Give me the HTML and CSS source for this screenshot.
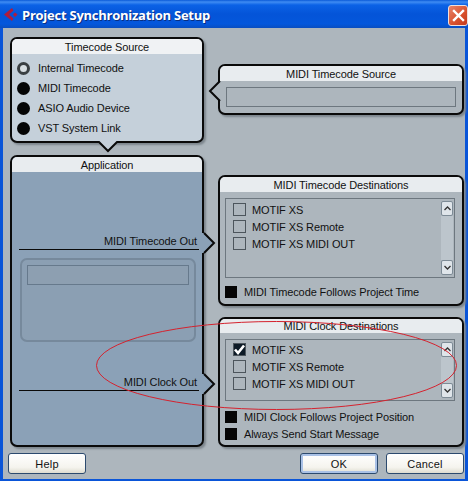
FILE: index.html
```html
<!DOCTYPE html>
<html>
<head>
    <meta charset="UTF-8">
    <title>Project Synchronization Setup</title>
    <link rel="stylesheet" href="styles.css">
</head>
<body>
    <div class="window">
        <div class="titlebar">
            <svg class="app-icon" width="16" height="16" viewBox="0 0 16 16">
                <path d="M8 0 L0 6.5 L8 13 L9.5 10.5 L5 6.5 L9.5 2.5 Z" fill="#b01c3c"/>
                <path d="M11 4.5 L13.5 6.5 L11 9 L9 6.5 Z" fill="#b01c3c"/>
            </svg>
            <span class="title-text">Project Synchronization Setup</span>
            <div class="close-btn">
                <svg width="13" height="13" viewBox="0 0 13 13">
                    <path d="M2 2 L11 11 M11 2 L2 11" stroke="#fff" stroke-width="2.4" stroke-linecap="square"/>
                </svg>
            </div>
        </div>

        <div class="content">
            <div class="panels">
                <div class="col-left">
                    <div class="panel source-panel">
                        <div class="panel-head">Timecode Source</div>
                        <div class="radio-list">
                            <div class="radio-row"><span class="radio on"></span>Internal Timecode</div>
                            <div class="radio-row"><span class="radio"></span>MIDI Timecode</div>
                            <div class="radio-row"><span class="radio"></span>ASIO Audio Device</div>
                            <div class="radio-row"><span class="radio"></span>VST System Link</div>
                        </div>
                        <svg class="notch notch-down" width="22" height="12" viewBox="0 0 22 12">
                            <path d="M1 0 L11 10 L21 0 Z" fill="#c5d0da"/>
                            <path d="M1 0 L11 10 L21 0" fill="none" stroke="#0a0a0a" stroke-width="2"/>
                        </svg>
                    </div>

                    <div class="panel app-panel">
                        <div class="panel-head">Application</div>
                        <div class="app-body">
                            <div class="out-row out-timecode">
                                MIDI Timecode Out
                                <svg class="notch notch-right" width="14" height="22" viewBox="0 0 14 22">
                                    <path d="M0 1 L2 1 L12 11 L2 21 L0 21 Z" fill="#8ba1b7"/>
                                    <path d="M2 1 L12 11 L2 21" fill="none" stroke="#0a0a0a" stroke-width="2"/>
                                </svg>
                            </div>
                            <div class="app-group">
                                <div class="app-field"></div>
                            </div>
                            <div class="out-row out-clock">
                                MIDI Clock Out
                                <svg class="notch notch-right" width="14" height="22" viewBox="0 0 14 22">
                                    <path d="M0 1 L2 1 L12 11 L2 21 L0 21 Z" fill="#8ba1b7"/>
                                    <path d="M2 1 L12 11 L2 21" fill="none" stroke="#0a0a0a" stroke-width="2"/>
                                </svg>
                            </div>
                        </div>
                    </div>
                </div>

                <div class="col-right">
                    <div class="panel mtc-panel">
                        <div class="panel-head">MIDI Timecode Source</div>
                        <div class="mtc-field"></div>
                        <svg class="notch notch-left" width="14" height="22" viewBox="0 0 14 22">
                            <path d="M12 1 L2 11 L12 21 L14 21 L14 1 Z" fill="#adb6bd"/>
                            <path d="M12 1 L2 11 L12 21" fill="none" stroke="#0a0a0a" stroke-width="2"/>
                        </svg>
                    </div>

                    <div class="panel dest-panel">
                        <div class="panel-head">MIDI Timecode Destinations</div>
                        <div class="listbox tall">
                            <div class="list-items">
                                <div class="list-row"><span class="check"></span>MOTIF XS</div>
                                <div class="list-row"><span class="check"></span>MOTIF XS Remote</div>
                                <div class="list-row"><span class="check"></span>MOTIF XS MIDI OUT</div>
                            </div>
                            <div class="scrollbar">
                                <span class="scroll-btn">
                                    <svg width="7" height="5" viewBox="0 0 7 5"><path d="M0.5 4 L3.5 1 L6.5 4" fill="none" stroke="#333" stroke-width="1.3"/></svg>
                                </span>
                                <span class="scroll-track"></span>
                                <span class="scroll-btn">
                                    <svg width="7" height="5" viewBox="0 0 7 5"><path d="M0.5 1 L3.5 4 L6.5 1" fill="none" stroke="#333" stroke-width="1.3"/></svg>
                                </span>
                            </div>
                        </div>
                        <div class="option-list">
                            <div class="option-row"><span class="box"></span>MIDI Timecode Follows Project Time</div>
                        </div>
                    </div>

                    <div class="panel dest-panel clock-panel">
                        <div class="panel-head">MIDI Clock Destinations</div>
                        <div class="listbox">
                            <div class="list-items">
                                <div class="list-row">
                                    <span class="check checked">
                                        <svg width="13" height="13" viewBox="0 0 13 13"><path d="M2 6.5 L5 10 L11 2.5" fill="none" stroke="#fff" stroke-width="2.6"/></svg>
                                    </span>MOTIF XS
                                </div>
                                <div class="list-row"><span class="check"></span>MOTIF XS Remote</div>
                                <div class="list-row"><span class="check"></span>MOTIF XS MIDI OUT</div>
                            </div>
                            <div class="scrollbar">
                                <span class="scroll-btn">
                                    <svg width="7" height="5" viewBox="0 0 7 5"><path d="M0.5 4 L3.5 1 L6.5 4" fill="none" stroke="#333" stroke-width="1.3"/></svg>
                                </span>
                                <span class="scroll-track"></span>
                                <span class="scroll-btn">
                                    <svg width="7" height="5" viewBox="0 0 7 5"><path d="M0.5 1 L3.5 4 L6.5 1" fill="none" stroke="#333" stroke-width="1.3"/></svg>
                                </span>
                            </div>
                        </div>
                        <div class="option-list">
                            <div class="option-row"><span class="box"></span>MIDI Clock Follows Project Position</div>
                            <div class="option-row"><span class="box"></span>Always Send Start Message</div>
                        </div>
                    </div>
                </div>
            </div>

            <div class="buttons">
                <button class="btn">Help</button>
                <div class="btn-group">
                    <button class="btn default">OK</button>
                    <button class="btn">Cancel</button>
                </div>
            </div>
        </div>

        <!-- red hand drawn mark on top of the dialog -->
        <svg class="annotation" width="468" height="481" viewBox="0 0 468 481">
            <ellipse cx="276.5" cy="365.5" rx="180" ry="44" fill="none" stroke="#d5222e" stroke-width="1"/>
        </svg>
    </div>
</body>
</html>
```

FILE: styles.css
```css
:root {
    --win: #adb6bd;
    --ink: #0a0a0a;
    --head: #e8ecef;
    --blue: #0a55d8;
}

html, body {
    margin: 0;
    padding: 0;
}

body {
    font-family: "Liberation Sans", Arial, sans-serif;
    font-size: 11px;
    letter-spacing: -0.1px;
    color: #111;
    width: 468px;
    height: 481px;
    overflow: hidden;
}

.window {
    position: relative;
    width: 468px;
    height: 481px;
    background-color: var(--blue);
    box-sizing: border-box;
    padding: 0 3px 2px 3px;
    display: flex;
    flex-direction: column;
}

.titlebar {
    height: 28px;
    margin: 0 -3px;
    padding: 0 0 0 4px;
    flex: none;
    display: flex;
    align-items: center;
    background: linear-gradient(to bottom, #0a5ad8 0, #3f8cf3 2px, #0b62e6 5px, #0454d8 14px, #0457dc 24px, #0a4ec0 28px);
}

.app-icon {
    flex: none;
    margin-top: 3px;
}

.title-text {
    margin-left: 2px;
    padding-top: 2px;
    flex: 1;
    color: #fff;
    font-family: "Open Sans", sans-serif;
    font-weight: 700;
    font-size: 13px;
    letter-spacing: -0.25px;
    text-shadow: 1px 1px 0 #0a2f80;
}

.close-btn {
    width: 20px;
    height: 21px;
    margin-top: 3px;
    border: 1px solid #f0e0dc;
    border-radius: 3px;
    background: linear-gradient(135deg, #e8846c, #d8502c 60%, #c23a1e);
    display: flex;
    align-items: center;
    justify-content: center;
    box-sizing: border-box;
}

.content {
    flex: 1;
    background-color: var(--win);
    padding: 9px 1px 0 7px;
    display: flex;
    flex-direction: column;
}

.panels {
    display: grid;
    grid-template-columns: 194px 246px;
    column-gap: 14px;
}

.col-left {
    display: flex;
    flex-direction: column;
    gap: 12px;
}

.col-right {
    display: flex;
    flex-direction: column;
    padding-top: 27px;
}

.panel {
    position: relative;
    border: 2px solid var(--ink);
    border-radius: 7px;
    box-shadow: 2px 2px 2px #7d868d;
    box-sizing: border-box;
    background-color: var(--win);
}

.panel-head {
    height: 15px;
    line-height: 17px;
    text-align: center;
    background-color: var(--head);
    border-radius: 5px 5px 0 0;
}

/* little arrows joining the panels */
.notch {
    position: absolute;
}

.notch-down {
    left: 85px;
    bottom: -12px;
}

.notch-left {
    left: -12px;
    top: 14px;
}

.notch-right {
    right: -17px;
    top: -1px;
}

/* timecode source */
.source-panel {
    height: 106px;
    background-color: #c5d0da;
}

.source-panel .panel-head {
    background-color: #f0f2f4;
}

.radio-list {
    padding: 4px 0 0 5px;
}

.radio-row {
    height: 20px;
    display: flex;
    align-items: center;
    gap: 8px;
}

.radio {
    width: 13px;
    height: 13px;
    border-radius: 50%;
    background-color: #050505;
    box-sizing: border-box;
}

.radio.on {
    background-color: #d8dee2;
    border: 3px solid #3a3f42;
}

/* application */
.app-panel {
    height: 292px;
    background-color: #8ba1b7;
}

.app-body {
    padding: 0 3px 0 7px;
    height: 273px;
    box-sizing: border-box;
    display: flex;
    flex-direction: column;
}

.out-row {
    position: relative;
    height: 17px;
    line-height: 17px;
    box-sizing: border-box;
    text-align: right;
    border-bottom: 1px solid var(--ink);
    padding-right: 2px;
    flex: none;
}

.out-timecode {
    margin-top: 61px;
}

.app-group {
    margin: 8px 3px 0 1px;
    height: 84px;
    border: 2px solid #76899c;
    border-radius: 7px;
    padding: 5px;
    box-sizing: border-box;
    background-color: #8b9fb3;
}

.app-field {
    height: 20px;
    border: 1px solid #66798c;
    box-sizing: border-box;
    background-color: #8d9fb1;
}

.out-clock {
    margin-top: 32px;
}

/* right side */
.mtc-panel {
    height: 51px;
}

.mtc-field {
    margin: 6px 6px 0 6px;
    height: 20px;
    border: 1px solid #6d777f;
    box-sizing: border-box;
}

.dest-panel {
    height: 131px;
}

.mtc-panel + .dest-panel {
    margin-top: 60px;
}

.dest-panel + .dest-panel {
    margin-top: 11px;
}

.clock-panel {
    height: 130px;
}

.clock-panel .panel-head {
    height: 14px;
    line-height: 15px;
}

.listbox {
    margin: 6px 7px 0 5px;
    height: 80px;
    border: 1px solid #6d777f;
    box-sizing: border-box;
    display: flex;
    justify-content: space-between;
}

.listbox:not(.tall) {
    height: 62px;
}

.list-items {
    padding: 2px 0 0 7px;
}

.clock-panel .list-items {
    padding-top: 1px;
}

.list-row {
    height: 17px;
    display: flex;
    align-items: center;
    gap: 6px;
}

.check {
    width: 13px;
    height: 13px;
    border: 1px solid #4c555c;
    box-sizing: border-box;
    display: flex;
    align-items: center;
    justify-content: center;
}

.check.checked {
    background-color: #0c1a26;
}

.check svg {
    flex: none;
}

.scrollbar {
    width: 12px;
    margin: 2px 1px 2px 0;
    display: flex;
    flex-direction: column;
}

.scroll-btn {
    height: 15px;
    flex: none;
    border: 1px solid #7d8b96;
    border-radius: 2px;
    box-sizing: border-box;
    background-color: #dfe5ea;
    display: flex;
    align-items: center;
    justify-content: center;
}

.scroll-track {
    flex: 1;
    background-color: #bcc5cc;
}

.option-list {
    padding: 5px 0 0 5px;
}

.clock-panel .option-list {
    padding-top: 7px;
}

.option-row {
    height: 17px;
    display: flex;
    align-items: center;
    gap: 7px;
}

.box {
    width: 12px;
    height: 12px;
    background-color: #050505;
    flex: none;
}

/* bottom buttons */
.buttons {
    margin-top: 6px;
    margin-left: -2px;
    display: flex;
    justify-content: space-between;
}

.btn-group {
    display: flex;
    gap: 8px;
}

.btn {
    width: 78px;
    height: 21px;
    padding: 0;
    border: 1px solid #2c4a6e;
    border-radius: 3px;
    background: linear-gradient(to bottom, #ffffff, #f5f4ee 70%, #dedcd0);
    font-family: "Liberation Sans", Arial, sans-serif;
    font-size: 11px;
    letter-spacing: 0.2px;
    color: #111;
}

.btn.default {
    box-shadow: inset 0 0 0 2px #a9c1e6;
}

.annotation {
    position: absolute;
    left: 0;
    top: 0;
    pointer-events: none;
}
```
